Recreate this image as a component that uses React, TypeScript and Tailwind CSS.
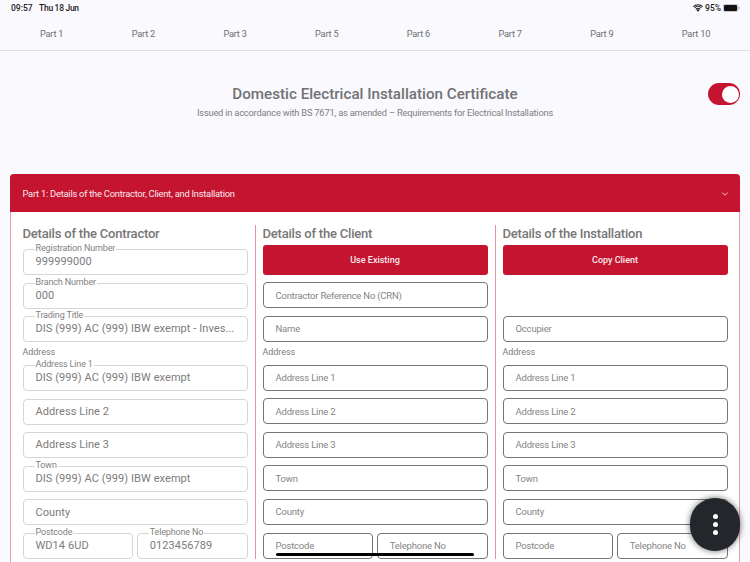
import React from "react";

const font = { fontFamily: "Roboto, sans-serif" };

function Filled({ label, value, placeholder, className = "" }: { label?: string; value?: string; placeholder?: string; className?: string }) {
  return (
    <div className={`relative shrink-0 h-[26px] rounded-[4px] border border-[#d6d6d6] bg-white flex items-center pl-[12px] pr-[6px] pt-[1px] text-[11px] tracking-[0.07px] text-[#7c7c7c] ${className}`}>
      {label && (
        <span className="absolute left-[11px] top-[-8px] bg-white px-[1px] text-[9px] leading-[12px] text-[#828282] tracking-[-0.15px] whitespace-nowrap">{label}</span>
      )}
      <span className="whitespace-nowrap">{value ?? placeholder}</span>
    </div>
  );
}

function Empty({ text, className = "" }: { text: string; className?: string }) {
  return (
    <div className={`shrink-0 h-[26px] rounded-[4px] border border-[#757575] bg-white flex items-center pl-[12px] pt-[1px] text-[9.5px] tracking-[-0.2px] text-[#858585] ${className}`}>
      {text}
    </div>
  );
}

function Red({ text }: { text: string }) {
  return (
    <div className="shrink-0 h-[29.600px] rounded-[3px] bg-[#c41430] flex items-center justify-center pt-[1px] text-[9px] font-medium text-[#fbe9ec]">
      {text}
    </div>
  );
}

function Heading({ text }: { text: string }) {
  return <div className="h-[20px] pb-[3px] flex items-center text-[13px] tracking-[-0.2px] font-medium leading-[17px] text-[#767676]">{text}</div>;
}

function AddressLabel() {
  return <div className="shrink-0 h-[12px] flex items-center text-[9px] leading-[12px] tracking-[-0.05px] text-[#808080] mt-[-3.800px] mb-[-0.600px]">Address</div>;
}

function BlankColumn({ first }: { first: React.ReactNode }) {
  return (
    <>
      {first}
      <AddressLabel />
      <Empty text="Address Line 1" />
      <Empty text="Address Line 2" />
      <Empty text="Address Line 3" />
      <Empty text="Town" />
      <Empty text="County" />
      <div className="flex gap-[3.500px] shrink-0">
        <Empty text="Postcode" className="flex-1 min-w-0" />
        <Empty text="Telephone No" className="flex-1 min-w-0" />
      </div>
    </>
  );
}

export default function App() {
  const tabs = ["Part 1", "Part 2", "Part 3", "Part 5", "Part 6", "Part 7", "Part 9", "Part 10"];
  return (
    <div style={font} className="relative w-[750px] h-[562px] overflow-hidden bg-[#f9f9fe]">
      {/* status bar */}
      <div className="h-[16px] flex items-center justify-between pl-[11px] pr-[10px] text-[8.5px] font-medium text-[#1c1c1c]">
        <div className="flex gap-[6.500px]">
          <span>09:57</span>
          <span className="tracking-[-0.3px]">Thu 18 Jun</span>
        </div>
        <div className="flex items-center gap-[2px]">
          <svg width="10" height="8" viewBox="0 0 20 16">
            <path d="M10 15.5 7 12a4.5 4.5 0 0 1 6 0Z" fill="#111" />
            <path d="M5 9.8a7.5 7.5 0 0 1 10 0l-1.3 1.5a5.5 5.5 0 0 0-7.400 0Z" fill="#111" />
            <path d="M2.500 7a11 11 0 0 1 15 0l-1.300 1.500a9 9 0 0 0-12.400 0Z" fill="#111" />
            <path d="M0 4.300a14.800 14.800 0 0 1 20 0l-1.300 1.500a12.800 12.800 0 0 0-17.400 0Z" fill="#111" />
          </svg>
          <span>95%</span>
          <svg width="17" height="8" viewBox="0 0 17 8">
            <rect x="0.3" y="0.3" width="14.4" height="7.4" rx="1.8" fill="none" stroke="#999" strokeWidth="0.6" />
            <rect x="1" y="1" width="13" height="6" rx="1.200" fill="#111" />
            <rect x="15.300" y="2.700" width="1" height="2.600" rx="0.500" fill="#999" />
          </svg>
        </div>
      </div>
      {/* tabs */}
      <nav className="h-[35px] flex items-center pl-[40px] pt-[1px] border-b border-[#e0e0e3] text-[9.2px] tracking-[-0.2px] text-[#6f6f6f]">
        {tabs.map((t) => (
          <span key={t} className="w-[91.7px] shrink-0">{t}</span>
        ))}
      </nav>
      {/* title */}
      <header className="relative h-[123px] flex flex-col items-center pt-[33px]">
        <h1 className="text-[15.200px] leading-[20px] font-medium text-[#727274]">Domestic Electrical Installation Certificate</h1>
        <p className="mt-[2px] text-[9.300px] leading-[14px] tracking-[-0.21px] text-[#808080]">Issued in accordance with BS 7671, as amended – Requirements for Electrical Installations</p>
        <div className="absolute right-[10px] top-[32px] w-[32px] h-[22px] rounded-full bg-[#c41430]">
          <div className="absolute right-[1px] top-[2.500px] w-[17px] h-[17px] rounded-full bg-white" />
        </div>
      </header>
      {/* panel */}
      <section className="mx-[10px] h-[420px] rounded-t-[4px] border-x border-[#e6a0ae] bg-white">
        <div className="mx-[-1px] h-[38px] pt-[1px] rounded-t-[4px] bg-[#c41430] flex items-center justify-between pl-[12.500px] pr-[10px] text-[9.300px] tracking-[-0.22px] text-[#fbe9ec]">
          <span>Part 1: Details of the Contractor, Client, and Installation</span>
          <svg width="10" height="10" viewBox="0 0 24 24" fill="none" stroke="#f5d5da" strokeWidth="2.200" strokeLinecap="round" strokeLinejoin="round">
            <path d="m6 9 6 6 6-6" />
          </svg>
        </div>
        <div className="grid grid-cols-[244px_240px_240px] pt-[13px]">
          <div className="h-[334px] pl-[11.500px] pr-[7.500px] flex flex-col gap-[7.600px]">
            <div className="mb-[-3.600px]"><Heading text="Details of the Contractor" /></div>
            <Filled label="Registration Number" value="999999000" />
            <Filled label="Branch Number" value="000" />
            <Filled label="Trading Title" value="DIS (999) AC (999) IBW exempt - Inves..." />
            <AddressLabel />
            <Filled label="Address Line 1" value="DIS (999) AC (999) IBW exempt" />
            <Filled placeholder="Address Line 2" />
            <Filled placeholder="Address Line 3" />
            <Filled label="Town" value="DIS (999) AC (999) IBW exempt" />
            <Filled placeholder="County" />
            <div className="flex gap-[3.500px] shrink-0">
              <Filled label="Postcode" value="WD14 6UD" className="flex-1 min-w-0" />
              <Filled label="Telephone No" value="0123456789" className="flex-1 min-w-0" />
            </div>
          </div>
          <div className="h-[334px] border-l border-[#e094a4] pl-[6.500px] pr-[7.500px] flex flex-col gap-[7.600px]">
            <div className="mb-[-7.600px]"><Heading text="Details of the Client" /></div>
            <BlankColumn
              first={
                <>
                  <Red text="Use Existing" />
                  <Empty text="Contractor Reference No (CRN)" />
                  <Empty text="Name" />
                </>
              }
            />
          </div>
          <div className="h-[334px] border-l border-[#e094a4] pl-[6.500px] pr-[7.500px] flex flex-col gap-[7.600px]">
            <div className="mb-[-7.600px]"><Heading text="Details of the Installation" /></div>
            <BlankColumn
              first={
                <>
                  <Red text="Copy Client" />
                  <div className="h-[26px] shrink-0" />
                  <Empty text="Occupier" />
                </>
              }
            />
          </div>
        </div>
      </section>
      {/* home indicator */}
      <div className="absolute left-[276px] top-[553px] w-[198px] h-[3px] rounded-full bg-black" />
      {/* floating action */}
      <div className="absolute left-[690px] top-[498px] w-[50px] h-[53px] rounded-full bg-[#23272b] shadow-[0_0_6px_rgba(0,0,0,0.6)] flex flex-col items-center justify-center gap-[2.600px]">
        <span className="w-[5px] h-[5px] rounded-full bg-white" />
        <span className="w-[5px] h-[5px] rounded-full bg-white" />
        <span className="w-[5px] h-[5px] rounded-full bg-white" />
      </div>
    </div>
  );
}
